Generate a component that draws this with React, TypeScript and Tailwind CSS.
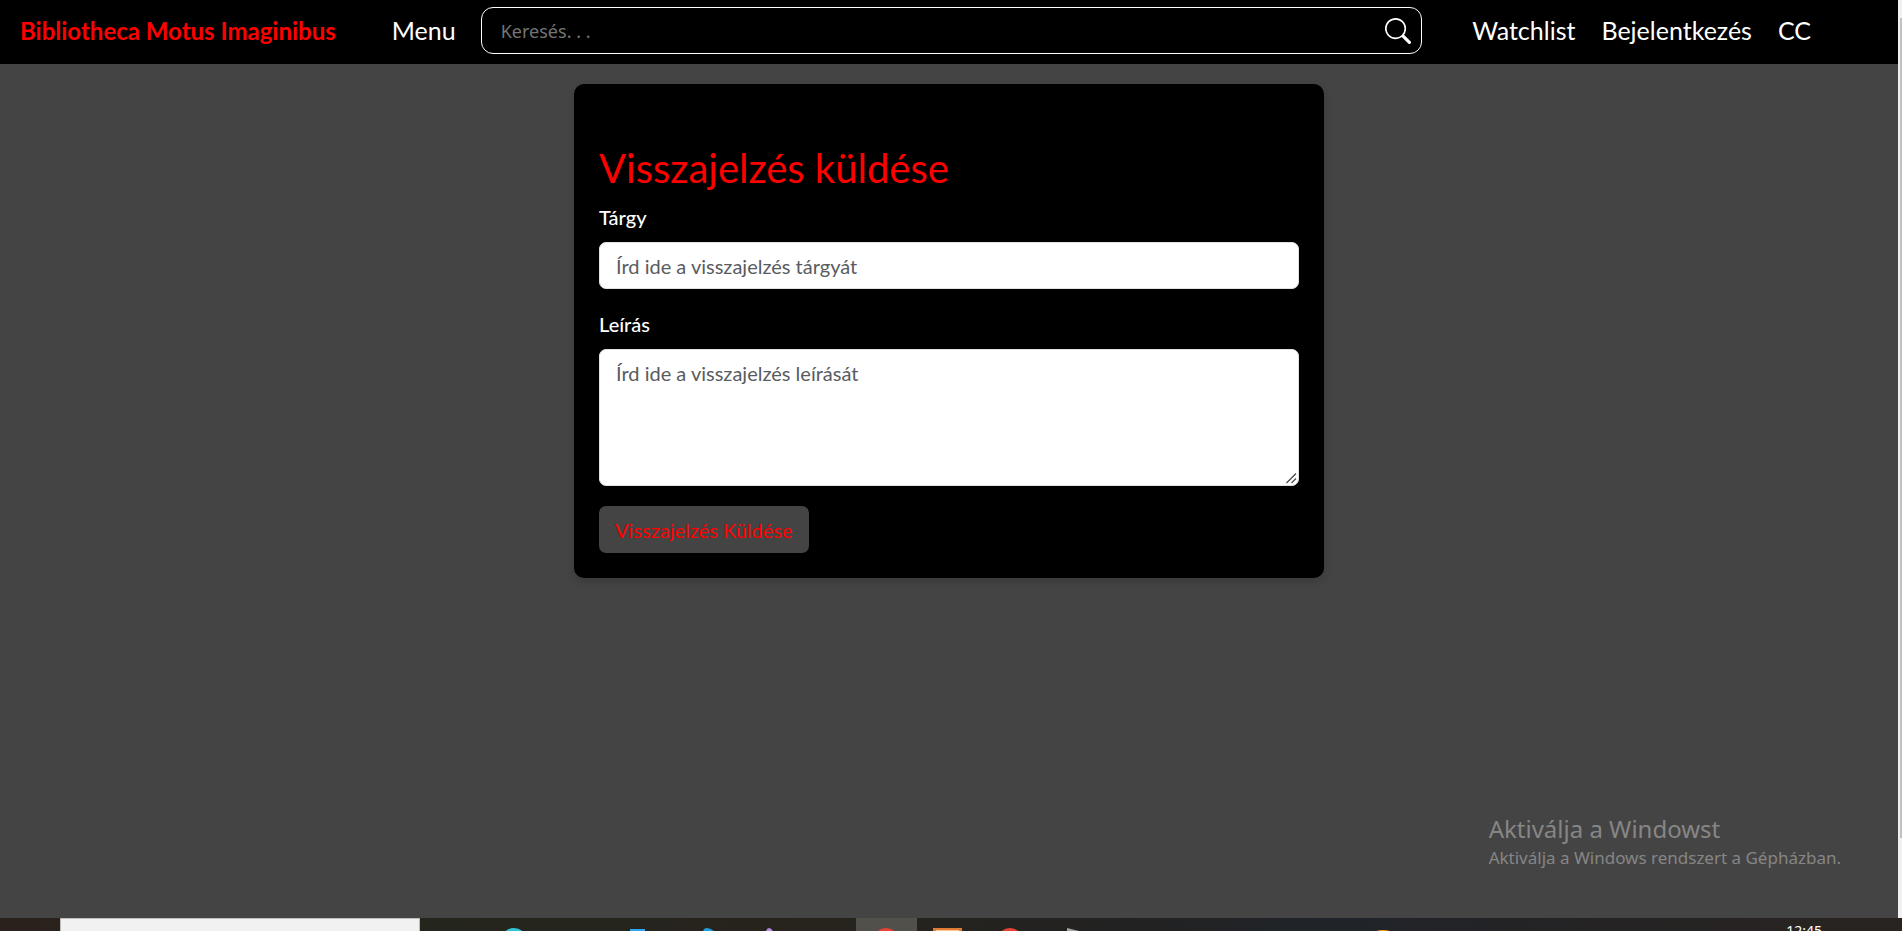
function SearchIcon() {
  return (
    <svg viewBox="0 0 16 16" className="size-[26px] fill-current" aria-hidden="true">
      <path d="M11.742 10.344a6.5 6.5 0 1 0-1.397 1.398h-.001c.03.04.062.078.098.115l3.85 3.85a1 1 0 0 0 1.415-1.414l-3.85-3.85a1.007 1.007 0 0 0-.115-.1zM12 6.5a5.5 5.5 0 1 1-11 0 5.5 5.5 0 0 1 11 0z" />
    </svg>
  );
}

function Navbar() {
  return (
    <header className="flex h-16 shrink-0 items-center bg-black pr-[87px] pb-[3px] pl-5 text-[25px] text-white">
      <a href="#" className="text-2xl font-bold whitespace-nowrap text-[#ff0000]">
        Bibliotheca Motus Imaginibus
      </a>
      <nav className="ml-14">
        <a href="#">Menu</a>
      </nav>
      <form className="ml-[25px] flex h-[47px] flex-1 items-center rounded-xl border border-white pr-2.5 pl-[19px]">
        <input
          type="search"
          aria-label="Keresés"
          placeholder="Keresés. . ."
          className="h-full min-w-0 flex-1 bg-transparent font-['Noto_Sans',sans-serif] text-lg outline-none placeholder:text-[#757575]"
        />
        <button type="button" aria-label="Keresés indítása">
          <SearchIcon />
        </button>
      </form>
      <nav className="ml-[50px] flex gap-[26px]">
        <a href="#">Watchlist</a>
        <a href="#">Bejelentkezés</a>
        <a href="#">CC</a>
      </nav>
    </header>
  );
}

function FeedbackCard() {
  const field =
    "block w-full rounded-[7px] border border-[#dee2e6] bg-white px-4 text-xl leading-[30px] text-[#212529] placeholder:text-[#595c5f]";
  return (
    <form className="mx-auto mt-5 w-full max-w-[750px] rounded-[10px] bg-black px-[25px] pt-[60px] pb-[25px] text-xl leading-[30px] text-white shadow-[0_4px_8px_rgba(0,0,0,0.15)]">
      <h1 className="mb-2.5 text-[40px] leading-12 text-[#ff0000]">Visszajelzés küldése</h1>
      <label htmlFor="subject" className="mb-2.5 block font-medium">
        Tárgy
      </label>
      <input id="subject" type="text" placeholder="Írd ide a visszajelzés tárgyát" className={`${field} mb-5 h-[47px]`} />
      <label htmlFor="description" className="mb-2.5 block font-medium">
        Leírás
      </label>
      <div className="relative mb-5">
        <textarea
          id="description"
          placeholder="Írd ide a visszajelzés leírását"
          className={`${field} h-[137px] resize-none py-2`}
        />
        <svg
          className="pointer-events-none absolute right-0.5 bottom-0.5 size-3"
          viewBox="0 0 12 12"
          fill="none"
          stroke="#505050"
          strokeWidth="1.4"
          aria-hidden="true"
        >
          <path d="M1.5 11L11 1.5M6.5 11L11 6.5" />
        </svg>
      </div>
      <button type="button" className="h-[47px] rounded-[7px] bg-[#444444] px-4 text-[#ff0000]">
        Visszajelzés Küldése
      </button>
    </form>
  );
}

function Taskbar() {
  return (
    <footer className="flex h-[13px] shrink-0 overflow-hidden bg-linear-to-r from-[#2b211c] via-[#222326] to-[#292421]">
      <div className="ml-[60px] w-[360px] shrink-0 border border-b-0 border-[#bcbcbc] bg-[#f1f1f1]" />
      <svg className="h-[13px] w-[1480px] shrink-0" viewBox="420 0 1480 13" aria-hidden="true">
        <defs>
          <linearGradient id="bar">
            <stop offset="0" stopColor="#24251d" />
            <stop offset="0.28" stopColor="#27231d" />
            <stop offset="0.48" stopColor="#222222" />
            <stop offset="0.62" stopColor="#20242a" />
            <stop offset="0.8" stopColor="#252324" />
            <stop offset="1" stopColor="#292421" />
          </linearGradient>
        </defs>
        <rect x="420" width="1482" height="13" fill="url(#bar)" />
        <rect x="856" width="61" height="13" fill="#51504a" />
        <circle cx="514" cy="23" r="13" fill="#30c5d5" />
        <rect x="630" y="11" width="15" height="4" fill="#2da8f0" />
        <path d="M703 13q1-3 4-3t7 3z" fill="#1d9fe0" />
        <path d="M766 13q1-3 3-3t4 3z" fill="#b78bea" />
        <circle cx="886" cy="23" r="13" fill="#e84133" />
        <rect x="933" y="10" width="29" height="4" fill="#e07a35" />
        <rect x="936" y="12" width="23" height="2" fill="#ffc58f" />
        <circle cx="1010" cy="23" r="13" fill="#e84133" />
        <path d="M1067 10l12 3h-12z" fill="#a5a5a0" />
        <ellipse cx="1383" cy="23" rx="16" ry="11" fill="#f3a51c" />
      </svg>
    </footer>
  );
}

export default function App() {
  return (
    <div className="relative flex h-screen min-h-[700px] flex-col overflow-hidden bg-[#444444] font-['Lato',sans-serif]">
      <div className="flex flex-1">
        <div className="flex flex-1 flex-col">
          <Navbar />
          <main>
            <FeedbackCard />
          </main>
        </div>
        <div className="flex w-1 justify-end bg-[#f1f1f1] pt-[18px] pb-20">
          <div className="w-0.5 bg-[#c1c1c1]" />
        </div>
      </div>
      <Taskbar />
      <aside className="absolute right-[61px] bottom-[60px] font-['Noto_Sans',sans-serif] text-[#868686]">
        <p className="text-2xl leading-8">Aktiválja a Windowst</p>
        <p className="text-[17px] leading-[26px]">Aktiválja a Windows rendszert a Gépházban.</p>
      </aside>
      <time className="absolute right-20 -bottom-2.5 font-['Noto_Sans',sans-serif] text-sm leading-5 text-white">
        12:45
      </time>
    </div>
  );
}
